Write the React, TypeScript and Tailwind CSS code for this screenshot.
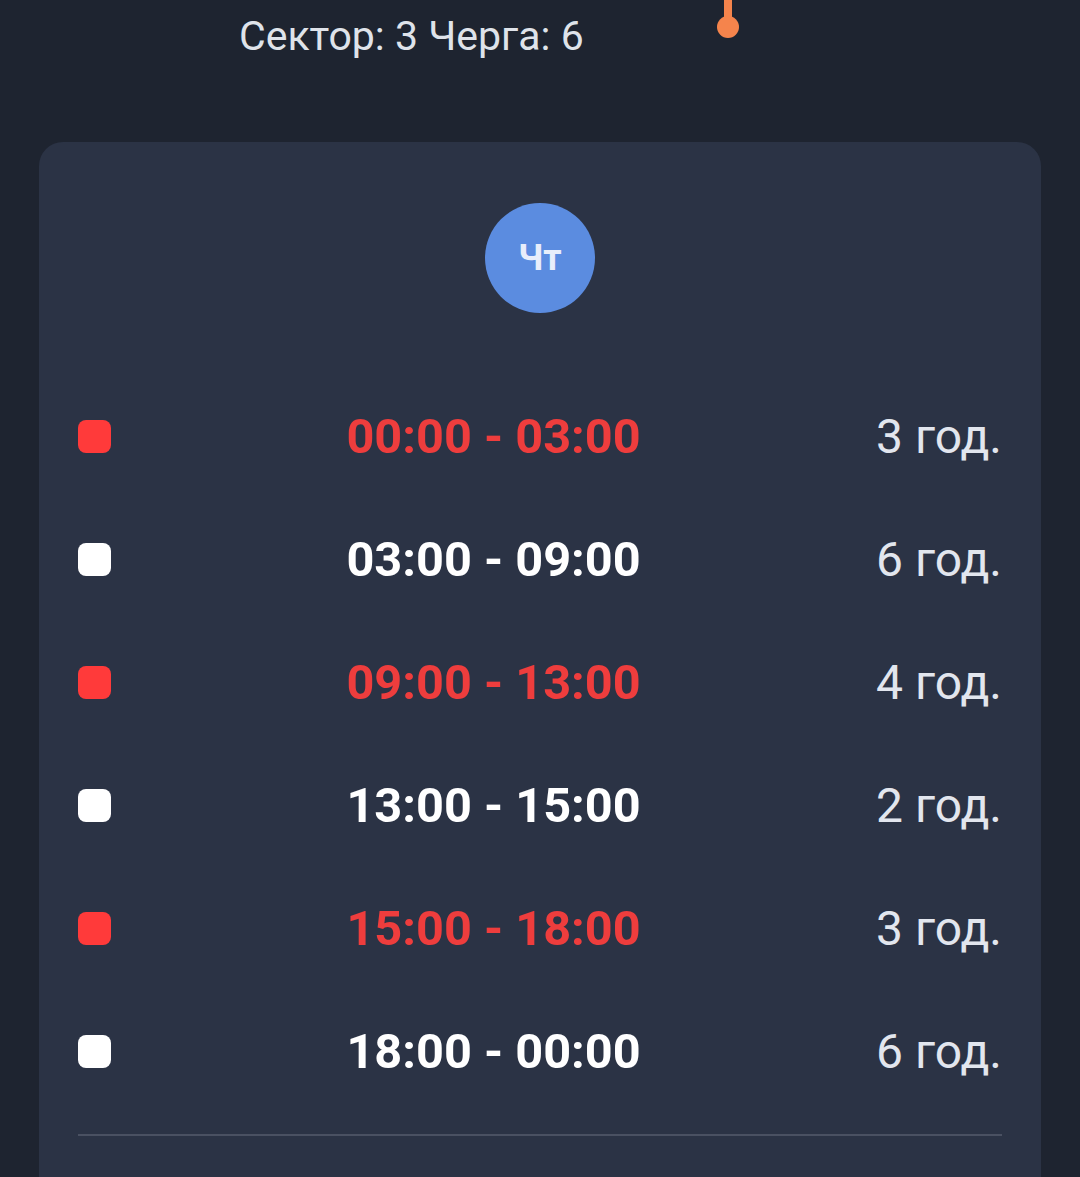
type Slot = {
  from: string;
  to: string;
  hours: number;
  off: boolean;
};

const slots: Slot[] = [
  { from: "00:00", to: "03:00", hours: 3, off: true },
  { from: "03:00", to: "09:00", hours: 6, off: false },
  { from: "09:00", to: "13:00", hours: 4, off: true },
  { from: "13:00", to: "15:00", hours: 2, off: false },
  { from: "15:00", to: "18:00", hours: 3, off: true },
  { from: "18:00", to: "00:00", hours: 6, off: false },
];

export default function App() {
  return (
    <div
      className="h-[1177px] w-[1080px] overflow-hidden bg-[#1e2430]"
      style={{ fontFamily: "Roboto, 'Noto Sans', sans-serif" }}
    >
      {/* header */}
      <div className="relative h-[142px]">
        <p className="ml-[239px] pt-[12px] text-[41px] leading-[1.2] text-[#dfe3ea]">
          Сектор: 3 Черга: 6
        </p>
        <svg
          className="absolute left-[714px] top-0"
          width="28"
          height="42"
          viewBox="0 0 28 42"
        >
          <line x1="14" y1="0" x2="14" y2="26" stroke="#f5844c" strokeWidth="8" />
          <circle cx="14" cy="27" r="11" fill="#f5844c" />
        </svg>
      </div>

      {/* schedule card */}
      <div className="mx-[39px] rounded-[24px] bg-[#2b3345] px-[39px] pt-[61px] pb-10">
        <div className="flex justify-center">
          <div className="flex h-[110px] w-[110px] items-center justify-center rounded-full bg-[#5b8ce0] text-[36px] font-bold text-[#e8eefb]">
            Чт
          </div>
        </div>

        <ul className="mt-[62px]">
          {slots.map((s, i) => (
            <li key={i} className="flex h-[123px] items-center">
              <div
                className={
                  s.off
                    ? "h-[33px] w-[33px] rounded-[8px] bg-[#ff3a3a]"
                    : "h-[33px] w-[33px] rounded-[8px] bg-white"
                }
              />
              <div
                className={
                  s.off
                    ? "flex-1 text-center text-[48.7px] font-bold text-[#ee3d3d]"
                    : "flex-1 text-center text-[48.7px] font-bold text-white"
                }
              >
                {s.from} - {s.to}
              </div>
              <div className="text-[48px] text-[#e2e6ee]">{s.hours} год.</div>
            </li>
          ))}
        </ul>

        <div className="mt-[21px] h-[2px] bg-[#4a5162]" />
        <div className="h-[100px]" />
      </div>
    </div>
  );
}
